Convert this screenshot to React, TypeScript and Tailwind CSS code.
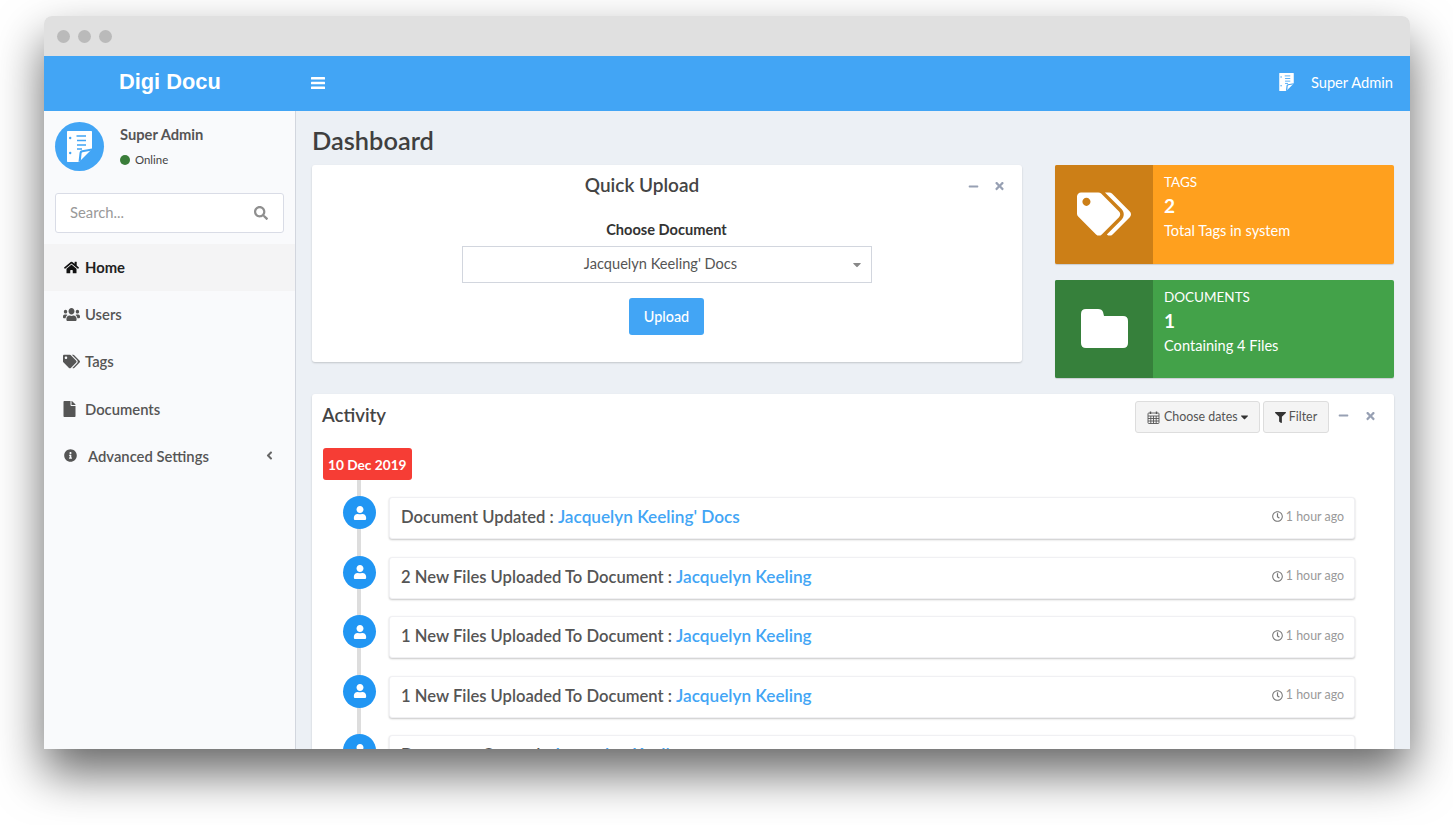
import type { ReactNode } from "react";
import {
  FaCaretDown,
  FaFile,
  FaFilter,
  FaHome,
  FaInfoCircle,
  FaMinus,
  FaRegClock,
  FaSearch,
  FaTags,
  FaTimes,
  FaUser,
  FaUsers,
  FaAngleLeft,
} from "react-icons/fa";

// page with punched holes and a folded corner
function DocLogo({ className, fill, ink }: { className: string; fill: string; ink: string }) {
  return (
    <svg viewBox="0 0 25 31" className={className}>
      <path d="M0 1 C0 .4 .4 0 1 0 H24 C24.600 0 25 .4 25 1 V18 L12 31 H1 C.4 31 0 30.600 0 30 Z" fill={fill} />
      <path d="M11.500 31 L12.500 22 C12.700 20.500 13.500 19.500 15 19.300 L25 17.500 V19.500 L15.500 21.300 C15 21.400 14.700 21.700 14.600 22.300 L13.800 30 Z" fill={ink} />
      <circle cx="3.200" cy="7" r="1.200" fill={ink} />
      <circle cx="3.200" cy="22" r="1.200" fill={ink} />
      <path d="M9.500 5 H19 M10 9.500 H19 M10 14 H19 M10 18 H15" stroke={ink} strokeWidth="1.500" fill="none" />
    </svg>
  );
}

function FolderIcon() {
  return (
    <svg viewBox="0 0 47 39" className="h-[39px] w-[47px]" fill="currentColor">
      <path d="M5 0 H17 Q21 0 22 3 L23 7 H42 Q47 7 47 12 V34 Q47 39 42 39 H5 Q0 39 0 34 V5 Q0 0 5 0 Z" />
    </svg>
  );
}

function CalendarIcon() {
  return (
    <svg viewBox="0 0 12 13" className="h-[13px] w-[13px]" fill="none" stroke="currentColor" strokeWidth="0.9">
      <rect x="0.500" y="2" width="11" height="10.500" rx="0.800" />
      <path d="M0.500 5 H11.500 M0.500 7.500 H11.500 M0.500 10 H11.500 M3.300 5 V12.500 M6 5 V12.500 M8.700 5 V12.500" />
      <path d="M3 0.500 V3 M9 0.500 V3" strokeWidth="1.400" />
    </svg>
  );
}

const navItems = [
  {
    label: "Users",
    icon: <FaUsers className="h-[15px] w-[17px]" preserveAspectRatio="none" />,
  },
  { label: "Tags", icon: <FaTags className="h-[15px] w-[17px]" /> },
  { label: "Documents", icon: <FaFile className="mr-[4px] h-[16px] w-[13px]" /> },
];

const activities = [
  { text: "Document Updated :", link: "Jacquelyn Keeling' Docs" },
  { text: "2 New Files Uploaded To Document :", link: "Jacquelyn Keeling" },
  { text: "1 New Files Uploaded To Document :", link: "Jacquelyn Keeling" },
  { text: "1 New Files Uploaded To Document :", link: "Jacquelyn Keeling" },
  { text: "Document Created :", link: "Jacquelyn Keeling" },
];

function BoxTools({ gap }: { gap: string }) {
  return (
    <div className={`flex items-center text-[#97a0b3] ${gap}`}>
      <FaMinus className="h-[11px] w-[11px]" />
      <FaTimes className="h-[12px] w-[11px]" />
    </div>
  );
}

function InfoBox(props: {
  iconBg: string;
  bg: string;
  icon: ReactNode;
  title: string;
  value: string;
  note: string;
}) {
  return (
    <div className={`flex h-[98.500px] rounded-[2px] text-white shadow-[0_1px_1px_rgba(0,0,0,0.15)] ${props.bg}`}>
      <div className={`flex w-[98px] items-center justify-center rounded-l-[2px] ${props.iconBg}`}>{props.icon}</div>
      <div className="flex-1 pl-[11px] pt-[8px]">
        <div className="text-[13.500px] leading-[18px]">{props.title}</div>
        <div className="mt-[2px] text-[19px] font-bold leading-[25px]">{props.value}</div>
        <div className="mt-[1px] text-[14.600px] leading-[24px]">{props.note}</div>
      </div>
    </div>
  );
}

export default function App() {
  return (
    <div className="h-[825px] w-[1453px] overflow-hidden bg-white pl-[44px] pt-[16px] font-['Lato','Noto_Sans',sans-serif] text-[#444]">
      <div className="flex h-[733px] w-[1366px] flex-col overflow-hidden rounded-t-[8px] shadow-[0_24px_48px_rgba(0,0,0,0.6)]">
        {/* title bar */}
        <div className="flex h-[40px] shrink-0 items-center gap-[8px] bg-[#e0e0e0] pl-[13px]">
          <span className="h-[13px] w-[13px] rounded-full bg-[#bababa]" />
          <span className="h-[13px] w-[13px] rounded-full bg-[#bababa]" />
          <span className="h-[13px] w-[13px] rounded-full bg-[#bababa]" />
        </div>

        {/* header */}
        <header className="flex h-[55px] shrink-0 items-center bg-[#42a5f5] pb-[2px] text-white">
          <div className="w-[251px] pl-[75px] font-['Liberation_Sans',sans-serif] text-[21.800px] font-bold">Digi Docu</div>
          <svg viewBox="0 0 14 12" className="ml-[16px] mt-[1px] h-[12px] w-[14px]" fill="currentColor">
            <rect width="14" height="2.600" rx="0.500" />
            <rect y="4.700" width="14" height="2.600" rx="0.500" />
            <rect y="9.400" width="14" height="2.600" rx="0.500" />
          </svg>
          <div className="ml-auto flex items-center gap-[17px] pr-[17px]">
            <DocLogo className="h-[18px] w-[15px]" fill="#fff" ink="#42a5f5" />
            <span className="text-[14.700px]">Super Admin</span>
          </div>
        </header>

        <div className="flex min-h-0 flex-1">
          {/* sidebar */}
          <aside className="w-[252px] shrink-0 border-r border-[#d2d6de] bg-[#f9fafc]">
            <div className="flex h-[71px] pl-[11px] pt-[11px]">
              <div className="flex h-[49px] w-[49px] items-center justify-center rounded-full bg-[#42a5f5]">
                <DocLogo className="h-[31px] w-[25px]" fill="#fff" ink="#42a5f5" />
              </div>
              <div className="pl-[16px]">
                <div className="pt-[2px] text-[14.700px] font-bold leading-[20px] text-[#555]">Super Admin</div>
                <div className="mt-[9px] flex items-center gap-[5px] text-[11.400px] leading-[14px]">
                  <span className="h-[10px] w-[10px] rounded-full bg-[#3a7d3a]" />
                  Online
                </div>
              </div>
            </div>
            <div className="mx-[11px] mt-[11px] flex h-[40px] w-[229px] items-center justify-between rounded-[3px] border border-[#d9dce6] bg-white pb-[2px] pl-[14px] pr-[15px] text-[14.800px] text-[#999]">
              <span>Search...</span>
              <FaSearch className="mt-[2px] h-[14px] w-[14px] text-[#8f8f8f]" />
            </div>
            <nav className="mt-[11px] text-[14.800px] font-semibold">
              <div className="flex h-[47px] items-center gap-[6px] bg-[#f4f4f5] pb-[1px] pl-[20px] font-bold text-[#222]">
                <FaHome className="h-[15px] w-[15px] text-[#111]" />
                Home
              </div>
              {navItems.map((item) => (
                <div key={item.label} className="flex h-[47.300px] items-center gap-[5px] pb-[1px] pl-[19px] text-[#555]">
                  {item.icon}
                  {item.label}
                </div>
              ))}
              <div className="flex h-[47px] items-center pb-[1px] pl-[20px] pr-[21px] text-[#555]">
                <FaInfoCircle className="h-[13px] w-[13px]" />
                <span className="ml-[11px]">Advanced Settings</span>
                <FaAngleLeft className="ml-auto h-[13px] w-[9px] text-[#666]" />
              </div>
            </nav>
          </aside>

          {/* main */}
          <main className="min-w-0 flex-1 overflow-hidden bg-[#ecf0f5] px-[16px]">
            <h1 className="h-[54px] pt-[12px] text-[25.400px] font-semibold leading-[34px] text-[#3f3f3f]">Dashboard</h1>

            <div className="flex gap-[33px]">
              <section className="relative h-[197px] w-[710px] rounded-[3px] bg-white shadow-[0_1px_2px_rgba(0,0,0,0.18)]">
                <div className="absolute right-[17px] top-[15px]">
                  <BoxTools gap="gap-[15px]" />
                </div>
                <h2 className="pr-[50px] pt-[6px] text-center text-[19px] font-semibold leading-[28px] text-[#444]">Quick Upload</h2>
                <div className="mt-[22px] flex flex-col items-center pr-[1px]">
                  <div className="text-[14.600px] font-bold leading-[18px] text-[#333]">Choose Document</div>
                  <div className="relative mt-[7px] flex h-[37px] w-[410px] items-center justify-center border border-[#d2d6de] pb-[2px] pr-[12px] text-[14.600px] text-[#555]">
                    Jacquelyn Keeling' Docs
                    <FaCaretDown className="absolute right-[8px] top-[11px] h-[13px] w-[12px] text-[#888]" />
                  </div>
                  <button className="mt-[15px] h-[37px] w-[75px] rounded-[3px] bg-[#42a5f5] text-[14.400px] font-medium text-white">Upload</button>
                </div>
              </section>

              <div className="flex w-[339px] flex-col gap-[16px]">
                <InfoBox
                  bg="bg-[#ffa01e]"
                  iconBg="bg-[#cc7f17]"
                  icon={<FaTags className="h-[46px] w-[54px]" />}
                  title="TAGS"
                  value="2"
                  note="Total Tags in system"
                />
                <InfoBox
                  bg="bg-[#43a249]"
                  iconBg="bg-[#36803b]"
                  icon={<FolderIcon />}
                  title="DOCUMENTS"
                  value="1"
                  note="Containing 4 Files"
                />
              </div>
            </div>

            {/* activity */}
            <section className="mt-[16px] rounded-[3px] bg-white pb-[20px] pl-[11px] pr-[39px] shadow-[0_1px_2px_rgba(0,0,0,0.18)]">
              <div className="-mr-[28px] flex h-[54px] items-start justify-between pt-[7px]">
                <h2 className="-ml-[1px] text-[18.600px] font-semibold leading-[28px] text-[#444]">Activity</h2>
                <div className="flex items-center text-[12.400px] text-[#555]">
                  <div className="flex h-[32px] w-[125px] items-center gap-[4px] rounded-[3px] border border-[#ddd] bg-[#f4f4f4] pl-[11px]">
                    <CalendarIcon />
                    Choose dates
                    <FaCaretDown className="-ml-[2px] h-[12px] w-[9px] text-[#333]" />
                  </div>
                  <div className="ml-[3px] flex h-[32px] w-[66px] items-center justify-center gap-[3px] rounded-[3px] border border-[#ddd] bg-[#f4f4f4]">
                    <FaFilter className="h-[11px] w-[11px] text-[#333]" />
                    Filter
                  </div>
                  <div className="ml-[9px] mr-[7px] -mt-[3px]">
                    <BoxTools gap="gap-[16px]" />
                  </div>
                </div>
              </div>

              <div className="relative">
                {/* timeline rail */}
                <div className="absolute bottom-0 left-[34px] top-0 w-[4px] bg-[#ddd]" />
                <div className="relative">
                  <span className="inline-block h-[32px] rounded-[3px] bg-[#f63d35] px-[5px] text-[13.700px] font-bold leading-[34px] text-white">10 Dec 2019</span>
                </div>
                <div className="mt-[17px] flex flex-col gap-[17.500px]">
                  {activities.map((a, i) => (
                    <div key={i} className="relative flex">
                      <div className="-mt-[1px] ml-[20px] flex h-[33px] w-[33px] shrink-0 items-center justify-center rounded-full bg-[#2196f3] text-white">
                        <FaUser className="h-[14px] w-[14px]" />
                      </div>
                      <div className="ml-[13px] flex h-[42px] flex-1 items-center justify-between rounded-[3px] border border-[#f0f0f3] bg-white pb-[2px] pl-[11px] pr-[10px] shadow-[0_1px_2px_rgba(0,0,0,0.22)]">
                        <div className="text-[16.600px] font-semibold text-[#555]">
                          {a.text} <span className="text-[17.200px] text-[#42a5f5]">{a.link}</span>
                        </div>
                        <div className="flex items-center gap-[3px] text-[12.400px] text-[#999]">
                          <FaRegClock className="h-[11px] w-[11px] text-[#777]" />
                          1 hour ago
                        </div>
                      </div>
                    </div>
                  ))}
                </div>
              </div>
            </section>
          </main>
        </div>
      </div>
    </div>
  );
}
